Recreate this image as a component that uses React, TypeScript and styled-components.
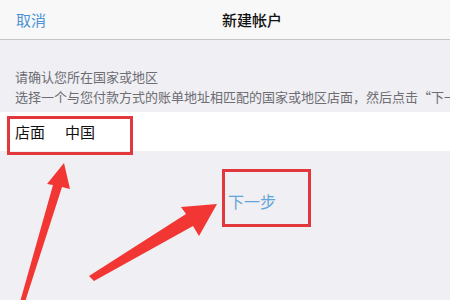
import React from "react";
import styled, { createGlobalStyle } from "styled-components";

const GlobalStyle = createGlobalStyle`
  html, body {
    margin: 0;
    padding: 0;
    background: #efeff4;
  }
  body {
    font-family: "Noto Sans CJK SC", "Noto Sans", sans-serif;
  }
`;

const Screen = styled.div`
  position: relative;
  width: 450px;
  height: 300px;
  overflow: hidden;
  background: #efeff4;
`;

const NavBar = styled.header`
  height: 39px;
  display: flex;
  align-items: center;
  padding-left: 16px;
  background: #f8f8f8;
  border-bottom: 1px solid #c6c6ca;
`;

const NavButton = styled.span`
  font-size: 15px;
  color: #4b92d6;
`;

const NavTitle = styled.span`
  margin-left: 176px;
  font-size: 15px;
  font-weight: 500;
  color: #111;
`;

const SectionHeader = styled.div`
  padding: 27px 0 5px 15px;
  font-size: 13px;
  line-height: 20px;
  color: #6d6d72;
  white-space: nowrap;
  overflow: hidden;
`;

const Row = styled.div`
  height: 39px;
  display: flex;
  align-items: center;
  gap: 20px;
  padding-left: 15px;
  background: #fff;
  font-size: 15px;
  color: #111;
`;

const NextLink = styled.div`
  margin-top: 40px;
  padding-left: 228px;
  font-size: 16px;
  line-height: 20px;
  color: #62a5d6;
`;

const Marker = styled.div<{ $x: number; $y: number; $w: number; $h: number; $t: number }>`
  position: absolute;
  left: ${(p) => p.$x}px;
  top: ${(p) => p.$y}px;
  width: ${(p) => p.$w}px;
  height: ${(p) => p.$h}px;
  box-sizing: border-box;
  border: ${(p) => p.$t}px solid #e0383d;
`;

const ArrowLayer = styled.svg`
  position: absolute;
  left: 0;
  top: 0;
  width: 450px;
  height: 300px;
  pointer-events: none;
`;

const App = () => {
  return (
    <>
      <GlobalStyle />
      <Screen>
        <NavBar>
          <NavButton>取消</NavButton>
          <NavTitle>新建帐户</NavTitle>
        </NavBar>
        <SectionHeader>
          <div>请确认您所在国家或地区</div>
          <div>选择一个与您付款方式的账单地址相匹配的国家或地区店面，然后点击“下一步”。</div>
        </SectionHeader>
        <Row>
          <span>店面</span>
          <span>中国</span>
        </Row>
        <NextLink>下一步</NextLink>

        <Marker $x={7} $y={116} $w={126} $h={39} $t={3} />
        <Marker $x={222} $y={169} $w={89} $h={58} $t={3} />

        <ArrowLayer viewBox="0 0 450 300">
          <polygon
            fill="#f23634"
            points="20,302 53,185 47,184 64,163 70,189 62,187 25,302"
          />
          <polygon
            fill="#f23634"
            points="89,276 186,214 181,207 217,204 199,236 193,226 94,281"
          />
        </ArrowLayer>
      </Screen>
    </>
  );
};

export default App;
